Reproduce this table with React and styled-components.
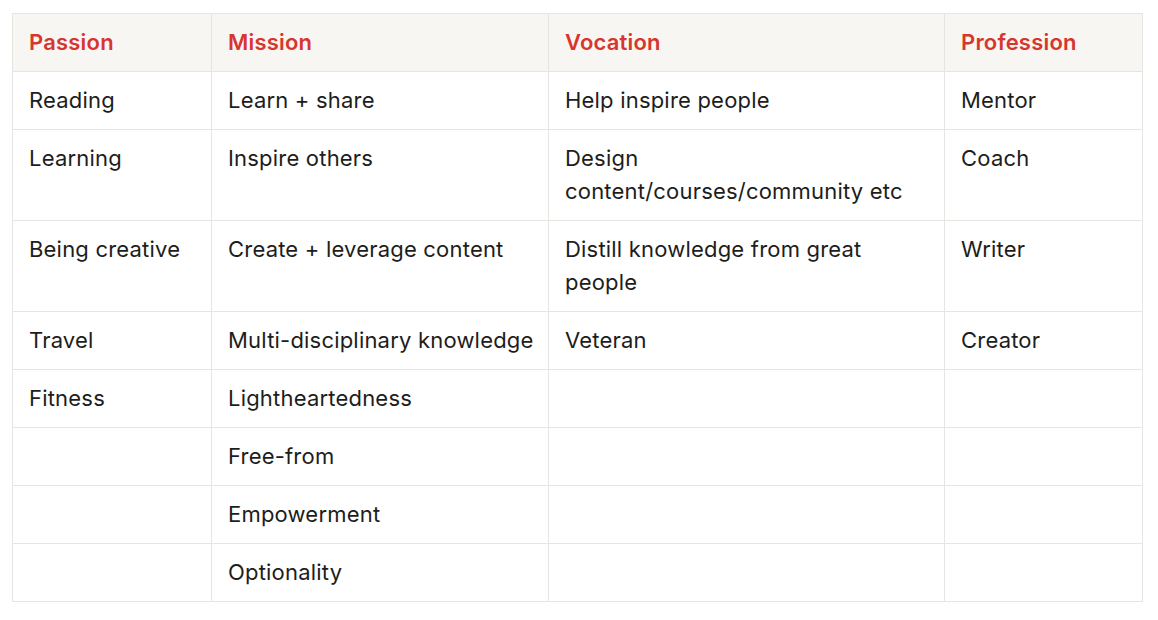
import React from "react";
import styled, { createGlobalStyle } from "styled-components";

const GlobalStyle = createGlobalStyle`
  body {
    margin: 0;
    background: #ffffff;
    font-family: Inter, "Noto Sans", sans-serif;
  }
`;

const Page = styled.div`
  padding: 13px 16px 20px 12px;
`;

const Table = styled.table`
  border-collapse: collapse;
  table-layout: fixed;
  width: 1130px;
  font-size: 22px;
  line-height: 33px;
  letter-spacing: 0.2px;
  color: #1d1d1b;
`;

const Col = styled.col`
  width: ${(p) => p.$w}px;
`;

const Head = styled.th`
  background: #f7f6f3;
  color: #d7362f;
  font-weight: 600;
  text-align: left;
  padding: 12px 10px 12px 16px;
  border: 1px solid #e6e5e2;
`;

const Cell = styled.td`
  vertical-align: top;
  padding: 12px 10px 12px 16px;
  border: 1px solid #e6e5e2;
`;

const headers = ["Passion", "Mission", "Vocation", "Profession"];

const rows = [
  ["Reading", "Learn + share", "Help inspire people", "Mentor"],
  ["Learning", "Inspire others", "Design content/courses/community etc", "Coach"],
  ["Being creative", "Create + leverage content", "Distill knowledge from great people", "Writer"],
  ["Travel", "Multi-disciplinary knowledge", "Veteran", "Creator"],
  ["Fitness", "Lightheartedness", "", ""],
  ["", "Free-from", "", ""],
  ["", "Empowerment", "", ""],
  ["", "Optionality", "", ""],
];

const widths = [199, 337, 396, 198];

const App = () => {
  return (
    <Page>
      <GlobalStyle />
      <Table>
        <colgroup>
          {widths.map((w, i) => (
            <Col key={i} $w={w} />
          ))}
        </colgroup>
        <thead>
          <tr>
            {headers.map((h) => (
              <Head key={h}>{h}</Head>
            ))}
          </tr>
        </thead>
        <tbody>
          {rows.map((r, i) => (
            <tr key={i}>
              {r.map((c, j) => (
                <Cell key={j}>{c}</Cell>
              ))}
            </tr>
          ))}
        </tbody>
      </Table>
    </Page>
  );
};

export default App;
